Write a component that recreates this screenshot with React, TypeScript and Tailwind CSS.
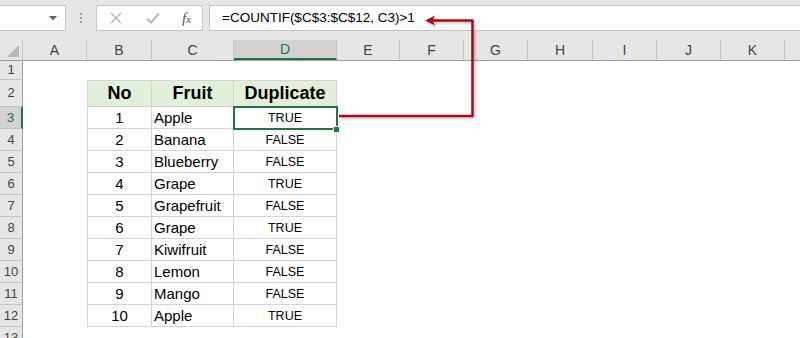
const cols = [
  { l: "A", w: "w-[64px]" },
  { l: "B", w: "w-[65px]" },
  { l: "C", w: "w-[82px]" },
  { l: "D", w: "w-[103px]" },
  { l: "E", w: "w-[63px]" },
  { l: "F", w: "w-[64px]" },
  { l: "G", w: "w-[64px]" },
  { l: "H", w: "w-[65px]" },
  { l: "I", w: "w-[64px]" },
  { l: "J", w: "w-[64px]" },
  { l: "K", w: "w-[64px]" },
  { l: "", w: "w-[64px]" },
];

const fruits: [number, string, string][] = [
  [1, "Apple", "TRUE"],
  [2, "Banana", "FALSE"],
  [3, "Blueberry", "FALSE"],
  [4, "Grape", "TRUE"],
  [5, "Grapefruit", "FALSE"],
  [6, "Grape", "TRUE"],
  [7, "Kiwifruit", "FALSE"],
  [8, "Lemon", "FALSE"],
  [9, "Mango", "FALSE"],
  [10, "Apple", "TRUE"],
];

function RowHead({ n, active }: { n: number; active?: boolean }) {
  return (
    <div
      className={
        "w-[23px] shrink-0 flex items-center justify-center text-[13px] text-[#444] border-b border-[#c6c6c6] " +
        (active
          ? "bg-[#d2d2d2] border-r-2 border-r-[#217346] text-[#217346]"
          : "bg-[#e6e6e6] border-r border-r-[#9f9f9f]")
      }
    >
      {n}
    </div>
  );
}

function Toolbar() {
  return (
    <div className="h-[40px] bg-[#e6e6e6] flex items-start pt-[5px]">
      <div className="w-[66px] h-[26px] bg-white border border-l-0 border-[#c6c6c6] flex items-center justify-end pr-[8px]">
        <svg width="8" height="5" viewBox="0 0 8 5">
          <polygon points="0,0 8,0 4,4.5" fill="#666" />
        </svg>
      </div>
      <div className="w-[30px] h-[26px] flex flex-col items-center justify-center gap-[2px]">
        <span className="w-[2px] h-[2px] bg-[#a6a6a6]" />
        <span className="w-[2px] h-[2px] bg-[#a6a6a6]" />
        <span className="w-[2px] h-[2px] bg-[#a6a6a6]" />
      </div>
      <div className="w-[107px] h-[26px] bg-white border border-[#c6c6c6] flex items-center">
        <svg width="12" height="12" viewBox="0 0 12 12" className="ml-[13px]">
          <path d="M1 1L11 11M11 1L1 11" stroke="#b5b5b5" strokeWidth="1.4" />
        </svg>
        <svg width="14" height="12" viewBox="0 0 14 12" className="ml-[24px]">
          <path d="M1 6.5L5 10.5L13 1.5" stroke="#b5b5b5" strokeWidth="2" fill="none" />
        </svg>
        <span className="ml-[22px] text-[15px] text-[#555] italic leading-none font-['Liberation_Serif',serif]">
          f<span className="text-[11px]">x</span>
        </span>
      </div>
      <div className="ml-[6px] flex-1 h-[26px] bg-white border border-r-0 border-[#c6c6c6] flex items-center pl-[12px] text-[13.5px] text-black">
        =COUNTIF($C$3:$C$12, C3)&gt;1
      </div>
    </div>
  );
}

function ColHeaders() {
  return (
    <div className="h-[21px] flex bg-[#e6e6e6] border-b border-[#9f9f9f]">
      <div className="w-[23px] shrink-0 flex items-end justify-end pr-[3px] pb-[3px] border-r border-[#c6c6c6]">
        <svg width="12" height="12" viewBox="0 0 12 12">
          <polygon points="12,0 12,12 0,12" fill="#b9b9b9" />
        </svg>
      </div>
      {cols.map((c) => (
        <div
          key={c.l + c.w}
          className={
            c.w +
            " shrink-0 flex items-center justify-center text-[14px] border-r border-[#c6c6c6] " +
            (c.l === "D"
              ? "bg-[#d2d2d2] text-[#217346] border-b-2 border-b-[#217346]"
              : "text-[#444]")
          }
        >
          {c.l}
        </div>
      ))}
    </div>
  );
}

export default function App() {
  const cell = "shrink-0 border-r border-b border-[#d4d4d4] flex items-center";
  return (
    <div className="relative w-[800px] h-[338px] overflow-hidden bg-white font-['Liberation_Sans',Arial,sans-serif]">
      <Toolbar />
      <ColHeaders />
      <div className="flex h-[19px]">
        <RowHead n={1} />
      </div>
      <div className="flex h-[27px]">
        <RowHead n={2} />
        <div className="w-[64px] shrink-0" />
        <div className={cell + " w-[65px] border-l border-t justify-center bg-[#e2efda] text-[18px] font-bold"}>No</div>
        <div className={cell + " w-[82px] border-t justify-center bg-[#e2efda] text-[18px] font-bold"}>Fruit</div>
        <div className={cell + " w-[103px] border-t justify-center bg-[#e2efda] text-[18px] font-bold"}>Duplicate</div>
      </div>
      {fruits.map(([n, name, dup], i) => (
        <div key={n} className="flex h-[22px]">
          <RowHead n={i + 3} active={i === 0} />
          <div className="w-[64px] shrink-0" />
          <div className={cell + " w-[65px] border-l justify-center text-[15px] pt-[1px]"}>{n}</div>
          <div className={cell + " w-[82px] pl-[2px] text-[15px] pt-[1px]"}>{name}</div>
          <div className={cell + " w-[103px] relative justify-center text-[12.5px] pt-[2px]"}>
            {dup}
            {i === 0 && (
              <>
                <div className="absolute z-10 left-[-1px] top-[-1px] w-[105px] h-[24px] border-2 border-[#217346]" />
                <div className="absolute z-20 left-[99px] top-[19px] w-[7px] h-[7px] bg-[#217346] border border-white" />
              </>
            )}
          </div>
        </div>
      ))}
      <div className="flex h-[22px]">
        <RowHead n={13} />
      </div>
      <svg
        className="absolute left-0 top-0 pointer-events-none"
        width="800"
        height="338"
        viewBox="0 0 800 338"
      >
        <defs>
          <filter id="sh" x="-10%" y="-10%" width="120%" height="120%">
            <feDropShadow dx="1.5" dy="1.5" stdDeviation="1" floodColor="#000" floodOpacity="0.25" />
          </filter>
        </defs>
        <g filter="url(#sh)">
          <path
            d="M339 116H472.5V20.5H431"
            stroke="#a3111b"
            strokeWidth="2.5"
            fill="none"
            strokeLinejoin="round"
          />
          <polygon points="425,20.5 435,15.5 432.5,20.5 435,25.5" fill="#a3111b" />
        </g>
      </svg>
    </div>
  );
}
